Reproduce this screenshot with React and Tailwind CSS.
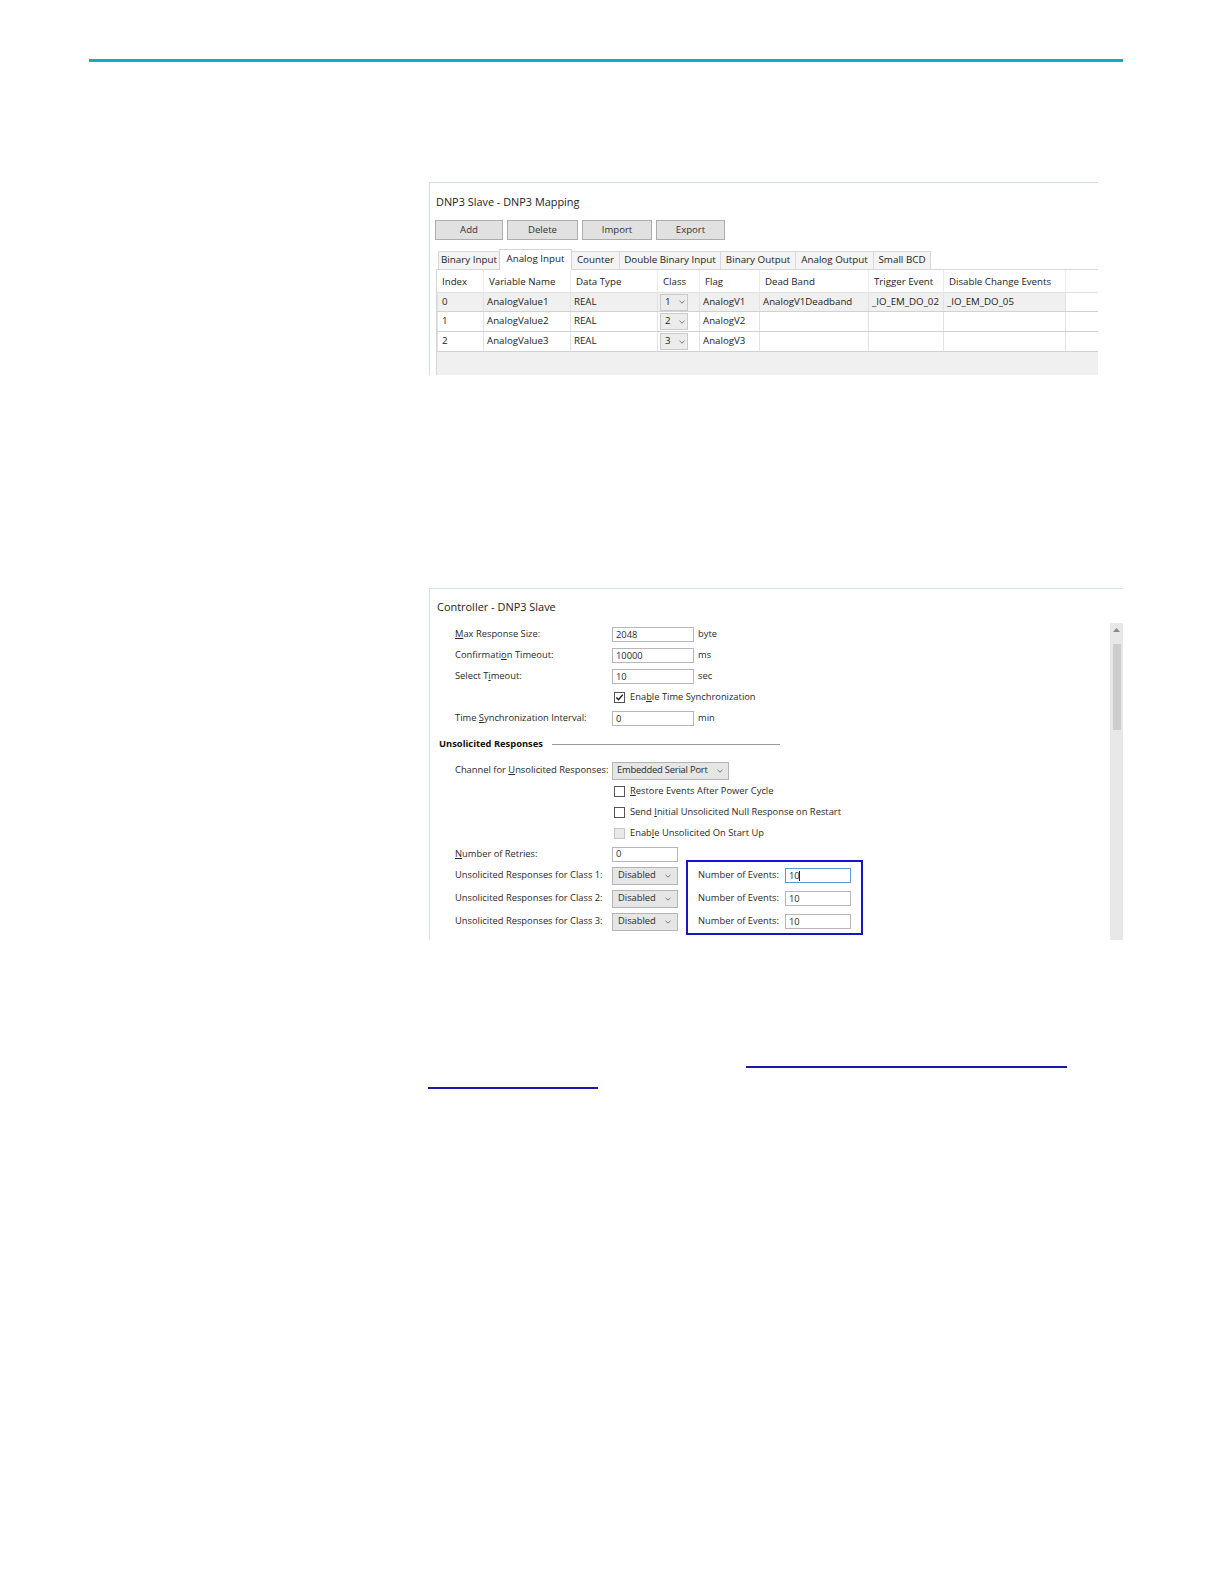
import React from "react";

const Chev = ({ className = "" }) => (
  <svg className={className} width="6" height="4" viewBox="0 0 6 4" fill="none">
    <path d="M0.5 0.8 L3 3.2 L5.5 0.8" stroke="#6b6b6b" strokeWidth="0.9" />
  </svg>
);

const U = ({ children }) => <span className="underline underline-offset-[1px]">{children}</span>;

const cols = [
  { w: 47, h: "Index" },
  { w: 87, h: "Variable Name" },
  { w: 87, h: "Data Type" },
  { w: 42, h: "Class" },
  { w: 60, h: "Flag" },
  { w: 109, h: "Dead Band" },
  { w: 75, h: "Trigger Event" },
  { w: 122, h: "Disable Change Events" },
];

const rows = [
  ["0", "AnalogValue1", "REAL", "1", "AnalogV1", "AnalogV1Deadband", "_IO_EM_DO_02", "_IO_EM_DO_05"],
  ["1", "AnalogValue2", "REAL", "2", "AnalogV2", "", "", ""],
  ["2", "AnalogValue3", "REAL", "3", "AnalogV3", "", "", ""],
];

const tabs = [
  { t: "Binary Input", w: 62 },
  { t: "Analog Input", w: 73, sel: true },
  { t: "Counter", w: 49 },
  { t: "Double Binary Input", w: 102 },
  { t: "Binary Output", w: 76 },
  { t: "Analog Output", w: 79 },
  { t: "Small BCD", w: 58 },
];

const buttons = [
  { t: "Add", w: 68 },
  { t: "Delete", w: 71 },
  { t: "Import", w: 70 },
  { t: "Export", w: 69 },
];

function Mapping() {
  return (
    <div className="mt-[120px] ml-[429px] w-[669px] h-[193px] border-l border-t border-[#cfe2e6] bg-white flex flex-col text-[#1f1f1f]">
      <div className="h-[37px] pt-[12px] pl-[6px] text-[10.9px] leading-[14px] text-[#222]">DNP3 Slave - DNP3 Mapping</div>
      <div className="flex gap-[4px] pl-[5px]">
        {buttons.map((b) => (
          <div
            key={b.t}
            style={{ width: b.w }}
            className="h-[20px] border border-[#adadad] bg-[#e1e1e1] flex items-center justify-center text-[9.6px] text-[#333]"
          >
            {b.t}
          </div>
        ))}
      </div>
      <div className="mt-[9px] pl-[8px] flex items-end h-[20px]">
        {tabs.map((t, i) => (
          <div
            key={t.t}
            style={{ width: t.w }}
            className={
              (i > 0 ? "-ml-px " : "") +
              (t.sel
                ? "h-[21px] bg-white border border-b-0 border-[#d4d4d4] relative z-10 -mb-px pb-[2px]"
                : "h-[18px] bg-[#f4f4f4] border border-b-0 border-[#d9d9d9]") +
              " flex items-center justify-center text-[9.8px] text-[#222] whitespace-nowrap"
            }
          >
            {t.t}
          </div>
        ))}
      </div>
      <div className="ml-[6px] flex-1 border-t border-l border-[#d6d6d6] bg-[#f0f0f0] flex flex-col text-[9.7px] text-[#222]">
        <div className="h-[22px] bg-white flex">
          {cols.map((c) => (
            <div key={c.h} style={{ width: c.w }} className="pl-[5px] pt-[6px] leading-[12px] border-r border-[#ececec] whitespace-nowrap">
              {c.h}
            </div>
          ))}
          <div className="flex-1" />
        </div>
        {rows.map((r, ri) => (
          <div key={ri} className={"h-[20px] flex border-b border-[#d2d2d2] " + (ri === 0 ? "bg-[#f0f0f0] border-t border-t-[#e2e2e2]" : "bg-white")}>
            {r.map((v, ci) => (
              <div
                key={ci}
                style={{ width: cols[ci].w }}
                className={
                  "flex items-center border-r border-[#e2e2e2] whitespace-nowrap " +
                  (ci === 0 ? "pl-[4px] border-l border-l-[#e2e2e2]" : ci === 3 ? "pl-[2px]" : "pl-[3px]")
                }
              >
                {ci === 3 ? (
                  <div className="w-[28px] h-[17px] border border-[#cacaca] bg-[#ececec] flex items-center pl-[4px] gap-[8px]">
                    <span>{v}</span>
                    <Chev />
                  </div>
                ) : (
                  v
                )}
              </div>
            ))}
            <div className="flex-1 bg-white" />
          </div>
        ))}
      </div>
    </div>
  );
}

const Input = ({ w, v, focus }) => (
  <div
    style={{ width: w }}
    className={
      "h-[15px] border bg-white flex items-center pl-[3px] leading-none " +
      (focus ? "border-[#5a9bd5]" : "border-[#b5b7bd]")
    }
  >
    {v}
    {focus && <span className="w-px h-[10px] bg-[#222] ml-[-1px]" />}
  </div>
);

const Select = ({ w, v, h = 18, tight }) => (
  <div
    style={{ width: w, height: h }}
    className={
      "border border-[#b4b4b4] bg-[#e6e6e6] flex items-center justify-between " +
      (tight ? "pl-[4px] pr-[5px] tracking-[-0.2px]" : "pl-[5px] pr-[6px]")
    }
  >
    <span className="whitespace-nowrap">{v}</span>
    <Chev />
  </div>
);

const Check = ({ checked, disabled }) => (
  <div
    className={
      "w-[11px] h-[11px] border flex items-center justify-center " +
      (disabled ? "border-[#c6c6c6] bg-[#e9e9e9]" : "border-[#555] bg-white")
    }
  >
    {checked && (
      <svg width="9" height="9" viewBox="0 0 9 9" fill="none">
        <path d="M1.3 4.6 L3.5 6.8 L7.8 1.6" stroke="#1a1a1a" strokeWidth="1.4" />
      </svg>
    )}
  </div>
);

function Row({ label, children, h = 21 }) {
  return (
    <div style={{ height: h }} className="flex items-center">
      <div className="w-[157px] whitespace-nowrap">{label}</div>
      {children}
    </div>
  );
}

function Slave() {
  return (
    <div className="mt-[213px] ml-[429px] w-[694px] h-[352px] border-l border-t border-[#d6e6e8] bg-white flex text-[9.35px] text-[#2a2a2a]">
      <div className="flex-1 flex flex-col">
        <div className="h-[35px] pt-[11px] pl-[7px] text-[10.95px] leading-[13px] text-[#222]">Controller - DNP3 Slave</div>
        <div className="pl-[25px]">
          <Row label={<><U>M</U>ax Response Size:</>}>
            <Input w={82} v="2048" />
            <span className="ml-[4px]">byte</span>
          </Row>
          <Row label={<>Confirmati<U>o</U>n Timeout:</>}>
            <Input w={82} v="10000" />
            <span className="ml-[4px]">ms</span>
          </Row>
          <Row label={<>Select T<U>i</U>meout:</>}>
            <Input w={82} v="10" />
            <span className="ml-[4px]">sec</span>
          </Row>
          <Row label="">
            <div className="ml-[2px] flex items-center gap-[5px]">
              <Check checked />
              <span>Ena<U>b</U>le Time Synchronization</span>
            </div>
          </Row>
          <Row label={<>Time <U>S</U>ynchronization Interval:</>}>
            <Input w={82} v="0" />
            <span className="ml-[4px]">min</span>
          </Row>
        </div>
        <div className="h-[31px] pt-[8px] pl-[9px] flex items-start">
          <div className="flex items-center h-[14px]">
            <span className="font-bold text-[#111]">Unsolicited Responses</span>
            <div className="ml-[9px] w-[228px] h-px bg-[#9a9a9a]" />
          </div>
        </div>
        <div className="pl-[25px]">
          <Row label={<>Channel for <U>U</U>nsolicited Responses:</>}>
            <Select w={117} h={18} v="Embedded Serial Port" tight />
          </Row>
          <Row label="">
            <div className="ml-[2px] flex items-center gap-[5px]">
              <Check />
              <span><U>R</U>estore Events After Power Cycle</span>
            </div>
          </Row>
          <Row label="">
            <div className="ml-[2px] flex items-center gap-[5px]">
              <Check />
              <span>Send <U>I</U>nitial Unsolicited Null Response on Restart</span>
            </div>
          </Row>
          <Row label="">
            <div className="ml-[2px] flex items-center gap-[5px]">
              <Check disabled />
              <span>Enab<U>l</U>e Unsolicited On Start Up</span>
            </div>
          </Row>
          <Row label={<><U>N</U>umber of Retries:</>} h={20}>
            <Input w={66} v="0" />
          </Row>
          <div className="flex items-start">
            <div className="w-[231px]">
              {[1, 2, 3].map((n) => (
                <Row key={n} label={`Unsolicited Responses for Class ${n}:`} h={23}>
                  <Select w={66} v="Disabled" />
                </Row>
              ))}
            </div>
            <div className="-mt-[4px] w-[177px] h-[75px] border-2 border-[#1616c4] pt-[2px] pl-[10px]">
              {[1, 2, 3].map((n) => (
                <div key={n} className="h-[23px] flex items-center">
                  <span className="w-[87px] whitespace-nowrap">Number of Events:</span>
                  <Input w={66} v="10" focus={n === 1} />
                </div>
              ))}
            </div>
          </div>
        </div>
      </div>
      <div className="w-[13px] mt-[34px] bg-[#e8e8e8] flex flex-col items-center">
        <div className="h-[14px] flex items-center justify-center">
          <svg width="7" height="4" viewBox="0 0 7 4">
            <path d="M0 4 L3.5 0 L7 4 Z" fill="#8a8a8a" />
          </svg>
        </div>
        <div className="mt-[7px] w-[8px] h-[86px] bg-[#cdcdcd]" />
      </div>
    </div>
  );
}

export default function App() {
  return (
    <div className="w-[1224px] h-[1584px] bg-white overflow-hidden font-['Open_Sans','Noto_Sans',sans-serif]">
      <div className="pt-[59px] pl-[89px]">
        <div className="w-[1034px] h-[3px] bg-[#1ca2db]" />
      </div>
      <Mapping />
      <Slave />
      <div className="mt-[126px] ml-[746px] w-[321px] h-[2px] bg-[#1a1aa6]" />
      <div className="mt-[19px] ml-[428px] w-[170px] h-[2px] bg-[#1a1aa6]" />
    </div>
  );
}
